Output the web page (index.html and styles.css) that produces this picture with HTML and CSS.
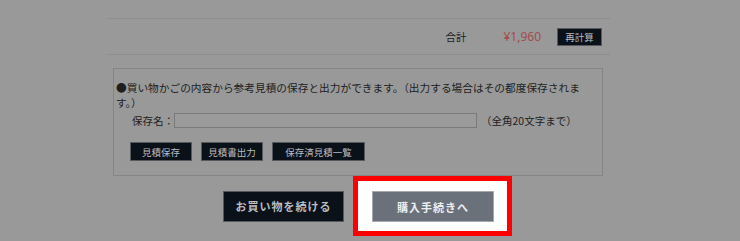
FILE: index.html
```html
<!DOCTYPE html>
<html lang="ja">

<head>
    <meta charset="UTF-8">
    <meta name="viewport" content="width=device-width, initial-scale=1.0">
    <title>買い物かご</title>
    <link rel="stylesheet" href="styles.css">
</head>

<body>
    <div class="cart">
        <div class="total-row">
            <span class="total-label">合計</span>
            <span class="total-price">¥1,960</span>
            <button type="button" class="btn-dark btn-recalc">再計算</button>
        </div>

        <div class="estimate">
            <p class="estimate-note">●買い物かごの内容から参考見積の保存と出力ができます。（出力する場合はその都度保存されます。）</p>
            <div class="save-row">
                <label class="save-label" for="saveName">保存名：</label>
                <input type="text" id="saveName" class="save-input">
                <span class="save-hint">（全角20文字まで）</span>
            </div>
            <div class="estimate-buttons">
                <button type="button" class="btn-dark btn-small">見積保存</button>
                <button type="button" class="btn-dark btn-small">見積書出力</button>
                <button type="button" class="btn-dark btn-small btn-wide">保存済見積一覧</button>
            </div>
        </div>

        <div class="checkout">
            <button type="button" class="btn-dark btn-continue">お買い物を続ける</button>
            <div class="spotlight">
                <button type="button" class="btn-purchase">購入手続きへ</button>
            </div>
        </div>
    </div>
</body>

</html>
```

FILE: styles.css
```css
body {
    margin: 0;
    height: 241px;
    overflow: hidden;
    background-color: #999999;
    color: #1e1e1e;
    font-family: "Noto Sans CJK JP", "Noto Sans", sans-serif;
}

.cart {
    width: 503px;
    margin-left: 107px;
    padding-top: 18px;
}

/* 合計 */
.total-row {
    display: flex;
    justify-content: flex-end;
    align-items: center;
    height: 35px;
    padding-right: 8px;
    border-top: 1px solid #8e8e8e;
    border-bottom: 1px solid #8e8e8e;
}

.total-label {
    font-size: 10.5px;
    margin-right: 37px;
}

.total-price {
    font-family: "Noto Sans", sans-serif;
    font-size: 12px;
    color: #a14d4b;
    margin-right: 16px;
}

button {
    font-family: "Noto Sans CJK JP", sans-serif;
    padding: 0;
    cursor: pointer;
}

.btn-dark {
    background-color: #0b1119;
    color: #b9bcc0;
    border: 1px solid #56595e;
}

.btn-recalc {
    width: 45px;
    height: 18px;
    font-size: 9.5px;
}

/* 見積 */
.estimate {
    box-sizing: border-box;
    width: 490px;
    margin: 13px 0 0 6px;
    padding: 11px 10px 14px 2px;
    border: 1px solid #858585;
    font-size: 10.7px;
}

.estimate-note {
    margin: 0;
    width: 476px;
    line-height: 15px;
}

.save-row {
    display: flex;
    align-items: center;
    height: 15px;
    margin-top: 3px;
    padding-left: 16px;
}

.save-label {
    font-size: 10.5px;
}

.save-input {
    box-sizing: border-box;
    width: 303px;
    height: 15px;
    margin: 0 4px 0 0;
    padding: 0;
    background-color: #9b9b9b;
    border: 1px solid #7a7a7a;
}

.save-hint {
    font-size: 10.5px;
}

.estimate-buttons {
    display: flex;
    gap: 9px;
    margin-top: 14px;
    padding-left: 14px;
}

.btn-small {
    width: 62px;
    height: 19px;
    font-size: 9.5px;
}

.btn-wide {
    width: 93px;
}

/* 購入 */
.checkout {
    display: flex;
    align-items: center;
    gap: 9px;
    margin-left: 116px;
}

.btn-continue {
    width: 121px;
    height: 31px;
    font-size: 11px;
    font-weight: bold;
    letter-spacing: 1px;
}

.spotlight {
    background-color: #ffffff;
    border: 5px solid #ff0000;
    padding: 10px 13px 9px 14px;
}

.btn-purchase {
    display: block;
    width: 122px;
    height: 31px;
    font-size: 11px;
    font-weight: bold;
    letter-spacing: 1px;
    color: #eceef0;
    background-color: #6b717a;
    border: 1px solid #a6a9ae;
}
```
